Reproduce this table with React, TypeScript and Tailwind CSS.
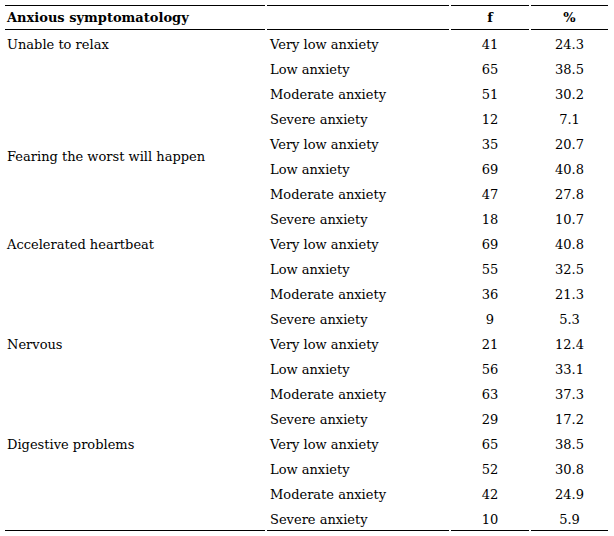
const groups = [
  {
    label: "Unable to relax",
    pad: "pt-[5px]",
    rows: [
      ["Very low anxiety", "41", "24.3"],
      ["Low anxiety", "65", "38.5"],
      ["Moderate anxiety", "51", "30.2"],
      ["Severe anxiety", "12", "7.1"],
    ],
  },
  {
    label: "Fearing the worst will happen",
    pad: "pt-[17px]",
    rows: [
      ["Very low anxiety", "35", "20.7"],
      ["Low anxiety", "69", "40.8"],
      ["Moderate anxiety", "47", "27.8"],
      ["Severe anxiety", "18", "10.7"],
    ],
  },
  {
    label: "Accelerated heartbeat",
    pad: "pt-[5px]",
    rows: [
      ["Very low anxiety", "69", "40.8"],
      ["Low anxiety", "55", "32.5"],
      ["Moderate anxiety", "36", "21.3"],
      ["Severe anxiety", "9", "5.3"],
    ],
  },
  {
    label: "Nervous",
    pad: "pt-[5px]",
    rows: [
      ["Very low anxiety", "21", "12.4"],
      ["Low anxiety", "56", "33.1"],
      ["Moderate anxiety", "63", "37.3"],
      ["Severe anxiety", "29", "17.2"],
    ],
  },
  {
    label: "Digestive problems",
    pad: "pt-[5px]",
    rows: [
      ["Very low anxiety", "65", "38.5"],
      ["Low anxiety", "52", "30.8"],
      ["Moderate anxiety", "42", "24.9"],
      ["Severe anxiety", "10", "5.9"],
    ],
  },
];

export default function App() {
  return (
    <div className="min-h-screen bg-white pl-[3px] pt-[5px] font-['DejaVu_Serif',serif] text-[13px] text-black">
      <table className="border-separate border-spacing-x-[2px] border-spacing-y-0">
        <thead>
          <tr>
            <th className="h-[25px] w-[260px] border-y border-black px-[2px] text-left font-bold">
              Anxious symptomatology
            </th>
            <th className="w-[182px] border-y border-black" />
            <th className="w-[78px] border-y border-black text-center font-bold">f</th>
            <th className="w-[77px] border-y border-black text-center font-bold">%</th>
          </tr>
        </thead>
        <tbody>
          {groups.map((g, gi) =>
            g.rows.map((r, ri) => {
              const last = gi === groups.length - 1 && ri === 3;
              const b = last ? "border-b border-black h-[26px]" : "h-[25px]";
              return (
                <tr key={gi + "-" + ri}>
                  {ri === 0 && (
                    <td
                      rowSpan={4}
                      className={`px-[2px] align-top ${g.pad} ${
                        gi === groups.length - 1 ? "border-b border-black" : ""
                      }`}
                    >
                      {g.label}
                    </td>
                  )}
                  <td className={`px-[3px] pt-[4px] pb-0 ${b}`}>{r[0]}</td>
                  <td className={`pt-[4px] pb-0 text-center ${b}`}>{r[1]}</td>
                  <td className={`pt-[4px] pb-0 text-center ${b}`}>{r[2]}</td>
                </tr>
              );
            })
          )}
        </tbody>
      </table>
    </div>
  );
}
